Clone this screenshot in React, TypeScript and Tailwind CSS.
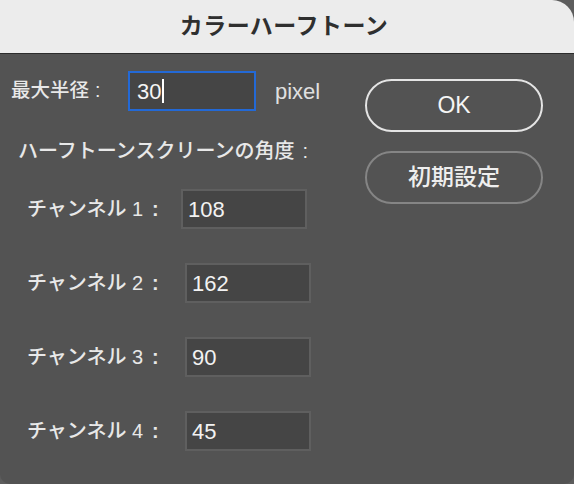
import React from 'react';

const FONT = { fontFamily: '"Liberation Sans", "Noto Sans CJK JP", sans-serif' };

const channels = [
  { label: 'チャンネル 1', value: '108', labelW: 'w-[154px]' },
  { label: 'チャンネル 2', value: '162', labelW: 'w-[158px]' },
  { label: 'チャンネル 3', value: '90', labelW: 'w-[158px]' },
  { label: 'チャンネル 4', value: '45', labelW: 'w-[158px]' },
];

// colon set apart from the label, as in the macOS dialog
const Colon: React.FC = () => <span className="ml-[9px] font-bold">:</span>;

const NumberBox: React.FC<{ value: string }> = ({ value }) => (
  <div className="w-[126px] h-[40px] bg-[#454545] border-2 border-[#5f5f5f] flex items-center pl-[5px] text-[22px] text-[#f2f2f2] font-medium">
    {value}
  </div>
);

const App: React.FC = () => {
  return (
    <div className="w-[574px] h-[484px] bg-[#5d5d5d]" style={FONT}>
      <div className="w-full h-full flex flex-col bg-[#535353] rounded-tr-[22px] rounded-b-[10px] overflow-hidden">
        {/* Title bar */}
        <div className="h-[54px] shrink-0 bg-[#ececec] border-b border-[#2c2c2c] flex items-center justify-center">
          <span className="text-[23px] font-bold text-[#2f2f2f] tracking-[0.5px] -ml-[6px]">カラーハーフトーン</span>
        </div>

        <div className="flex flex-1">
          {/* Left column */}
          <div className="flex flex-col pl-[11px] pt-[17px] w-[354px]">
            <div className="flex items-center h-[40px]">
              <span className="w-[117px] text-[19.5px] text-[#e8e8e8] font-medium">
                最大半径<span className="ml-[6px]">:</span>
              </span>
              <div className="w-[128px] h-[40px] bg-[#454545] border-2 border-[#2369d6] flex items-center pl-[7px] text-[22px] text-[#f5f5f5] font-medium">
                30
                <span className="inline-block w-[2px] h-[24px] bg-white ml-[1px]" />
              </div>
              <span className="ml-[19px] text-[22px] text-[#e0e0e0]">pixel</span>
            </div>

            <div className="mt-[26px] h-[28px] leading-[28px] pl-[7px] text-[20px] text-[#e8e8e8] font-medium">
              ハーフトーンスクリーンの角度<span className="ml-[8px]">:</span>
            </div>

            <div className="mt-[24px] flex flex-col gap-[34px] pl-[16px]">
              {channels.map((c) => (
                <div key={c.label} className="flex items-center h-[40px]">
                  <span className={`${c.labelW} text-[20px] text-[#e8e8e8] font-medium`}>
                    {c.label}
                    <Colon />
                  </span>
                  <NumberBox value={c.value} />
                </div>
              ))}
            </div>
          </div>

          {/* Right column */}
          <div className="flex flex-col gap-[19px] pt-[25px] pl-[11px]">
            <button className="w-[178px] h-[53px] rounded-full border-2 border-[#e4e4e4] text-[23px] text-[#f5f5f5] font-medium">
              OK
            </button>
            <button className="w-[178px] h-[53px] rounded-full border-2 border-[#858585] text-[23px] text-[#eeeeee] font-medium">
              初期設定
            </button>
          </div>
        </div>
      </div>
    </div>
  );
};

export default App;
